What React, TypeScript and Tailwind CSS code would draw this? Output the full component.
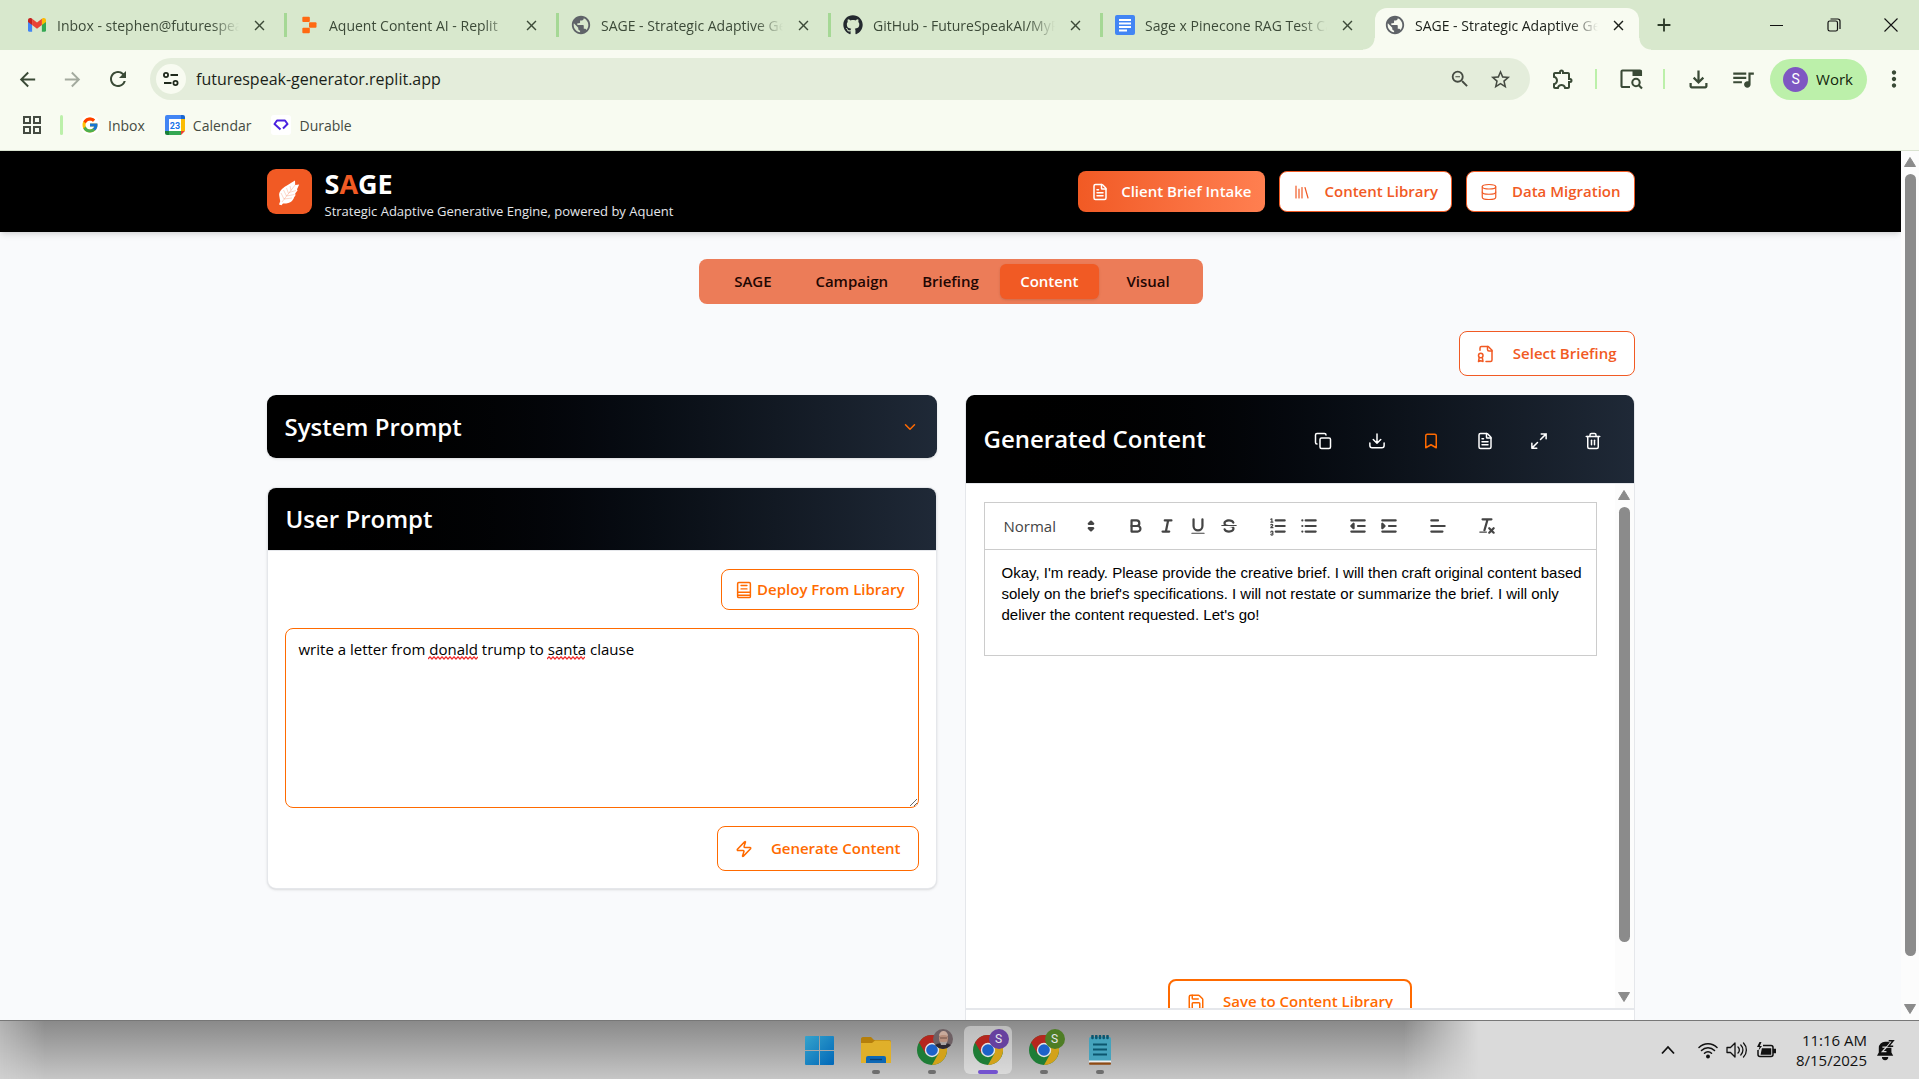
import React, { useState } from "react";
import {
  BookmarkIcon,
  ChevronDown,
  Copy,
  Database,
  FileText,
  Library,
  Save,
  Trash2,
  Zap,
} from "lucide-react";
import { FaGithub } from "react-icons/fa";
import { FcGoogle } from "react-icons/fc";
import {
  MdAdd,
  MdArrowBack,
  MdArrowForward,
  MdClose,
  MdMoreVert,
  MdOutlineExtension,
  MdOutlineFileDownload,
  MdPublic,
  MdQueueMusic,
  MdRefresh,
  MdStarBorder,
  MdZoomOut,
} from "react-icons/md";

/* ---------- brand and browser glyphs ---------- */

const GmailIcon = () => (
  <svg viewBox="0 0 24 24" className="size-[18px]">
    <path fill="#4285f4" d="M0 5.5V19a2 2 0 0 0 2 2h3.5V10z" />
    <path fill="#34a853" d="M24 5.5V19a2 2 0 0 1-2 2h-3.5V10z" />
    <path fill="#c5221f" d="M0 5.5C0 2.8 3 1.9 5 3.3l.5.4V12L0 8z" />
    <path fill="#fbbc04" d="M24 5.5c0-2.700-3-3.600-5-2.200l-.5.4V12L24 8z" />
    <path fill="#ea4335" d="M5.500 3.700 12 8.600l6.500-4.900V12L12 16.900 5.500 12z" />
  </svg>
);

const ReplitIcon = () => (
  <svg viewBox="0 0 24 24" className="size-5" fill="#ff6a13">
    <rect x="4" y="2" width="9" height="6.500" rx="1.200" />
    <rect x="12" y="8.700" width="9" height="6.500" rx="1.200" />
    <rect x="4" y="15.400" width="9" height="6.500" rx="1.200" />
  </svg>
);

const DocsIcon = () => (
  <svg viewBox="0 0 20 20" className="size-5">
    <rect width="20" height="20" rx="2" fill="#4285f4" />
    <path d="M4 5h12M4 8.500h12M4 12h12M4 15.500h8" stroke="#fff" strokeWidth="1.900" />
  </svg>
);

const CalendarIcon = () => (
  <svg viewBox="0 0 20 20" className="size-5">
    <path fill="#4285f4" d="M2 0h14v4H4v12H0V2a2 2 0 0 1 2-2z" />
    <path fill="#1967d2" d="M16 0h2a2 2 0 0 1 2 2v2h-4z" />
    <path fill="#fbbc04" d="M16 4h4v12h-4z" />
    <path fill="#34a853" d="M4 16h12v4H4z" />
    <path fill="#188038" d="M0 16h4v4H2a2 2 0 0 1-2-2z" />
    <path fill="#ea4335" d="M16 16h4l-4 4z" />
    <path fill="#fff" d="M4 4h12v12H4z" />
    <text x="10" y="13.500" textAnchor="middle" fontSize="9" fontWeight="700" fill="#1a73e8" fontFamily="Roboto, sans-serif">
      23
    </text>
  </svg>
);

const DurableIcon = () => (
  <svg viewBox="0 0 20 20" className="size-5">
    <rect width="20" height="20" rx="3" fill="#fff" />
    <path d="M9.500 14.500 3.500 9l2.500-3.500h8L16.500 9 12 13.500" fill="none" stroke="#4a21e0" strokeWidth="2" strokeLinejoin="round" />
  </svg>
);

const SiteInfoIcon = () => (
  <svg viewBox="0 0 18 18" className="size-[18px]" fill="none" stroke="#1f2a1c" strokeWidth="1.800">
    <circle cx="4" cy="5" r="2.100" />
    <path d="M8.500 5H16M2 13h7.500" />
    <circle cx="13.500" cy="13" r="2.100" />
  </svg>
);

const AppsIcon = () => (
  <svg viewBox="0 0 20 20" className="size-5" fill="none" stroke="#454b42" strokeWidth="2">
    <path d="M2 2h6v6H2zM12 2h6v6h-6zM2 12h6v6H2zM12 12h6v6h-6z" />
  </svg>
);

const SearchTabIcon = () => (
  <svg viewBox="0 0 24 24" className="size-6" fill="none" stroke="#3a4a36" strokeWidth="2.100">
    <path d="M11 20H3.500a1 1 0 0 1-1-1V4.500a1 1 0 0 1 1-1H21a1 1 0 0 1 1 1V9" />
    <path d="M13.500 3h9v6h-9z" fill="#3a4a36" stroke="none" />
    <circle cx="17" cy="15.500" r="3.700" />
    <path d="m19.800 18.300 3.200 3.200" />
  </svg>
);

const LeafLogo = () => (
  <svg viewBox="0 0 45 45" className="size-[45px]">
    <path
      fill="#fff"
      d="M28 11.500c-4 2.800-10 5.500-13 8.500-2 2-3.300 4.500-2.800 6.500l1 5.800L12 35.500l2.500.7 1.500-1.700c3 .3 7-.8 8.700-2.300 1.300-1.200 2-2.500 2.300-3.700l1.500-2.300-.3-1.600 2.300-3-.5-1.400 2.200-4.700-4 .6z"
    />
    <path
      fill="none"
      stroke="#f15a24"
      strokeWidth=".7"
      opacity=".35"
      d="M15 33 28.500 15.500M14 24l3 6M16.500 21l3 6M19.500 19l2 5.500M23 17l1 4.500M17 30l8-1M19.500 27l8-1.500M22 23.500l7-2"
    />
  </svg>
);

/* ---------- application glyphs ---------- */

const stroke = {
  viewBox: "0 0 24 24",
  fill: "none",
  stroke: "currentColor",
  strokeWidth: 2,
  strokeLinecap: "round" as const,
  strokeLinejoin: "round" as const,
};

const FileBadgeIcon = () => (
  <svg {...stroke} className="size-[18px]">
    <path d="M12 22h6a2 2 0 0 0 2-2V7l-5-5H6a2 2 0 0 0-2 2v3" />
    <path d="M14 2v4a2 2 0 0 0 2 2h4" />
    <path d="M5 17a3 3 0 1 0 0-6 3 3 0 0 0 0 6z" />
    <path d="M7 16.500 8 22l-3-1-3 1 1-5.500" />
  </svg>
);

const BookIcon = () => (
  <svg {...stroke} className="size-[18px]">
    <rect x="3.500" y="2" width="17" height="20" rx="1.500" />
    <path d="M8 6h8M8 10.500h8M3.500 15h17M3.500 19h17" strokeWidth="1.700" />
  </svg>
);

const ExpandIcon = () => (
  <svg {...stroke} className="size-[18px]">
    <path d="M15 2.500h6.500V9M9 21.500H2.500V15M21.500 2.500 14 10M10 14l-7.500 7.500" />
  </svg>
);

const TrayDownload = () => (
  <svg {...stroke} className="size-[18px]">
    <path d="M12 2.500V15M7 10l5 5 5-5M2.500 14.500V18a3 3 0 0 0 3 3h13a3 3 0 0 0 3-3v-3.500" />
  </svg>
);

/* ---------- rich-text toolbar glyphs (18-unit grid) ---------- */

const Glyph = ({ children }: { children: React.ReactNode }) => (
  <svg viewBox="0 0 18 18" className="size-5" fill="none" stroke="#444" strokeWidth="2" strokeLinecap="round" strokeLinejoin="round">
    {children}
  </svg>
);

const editorGroups: { label: string; icon: React.ReactNode }[][] = [
  [
    {
      label: "Bold",
      icon: (
        <Glyph>
          <path d="M5,4H9.500A2.500,2.500,0,0,1,12,6.500v0A2.500,2.500,0,0,1,9.500,9H5A0,0,0,0,1,5,9V4A0,0,0,0,1,5,4Z" />
          <path d="M5,9h5.500A2.500,2.500,0,0,1,13,11.500v0A2.500,2.500,0,0,1,10.500,14H5a0,0,0,0,1,0,0V9A0,0,0,0,1,5,9Z" />
        </Glyph>
      ),
    },
    { label: "Italic", icon: <Glyph><path d="M7 4h6M5 14h6M8 14l2-10" /></Glyph> },
    {
      label: "Underline",
      icon: (
        <Glyph>
          <path d="M5,3V9a4.012,4.012,0,0,0,4,4H9a4.012,4.012,0,0,0,4-4V3" />
          <rect x="3" y="15" width="12" height="1" rx=".5" fill="#444" stroke="none" />
        </Glyph>
      ),
    },
    {
      label: "Strike",
      icon: (
        <Glyph>
          <path strokeWidth="1" d="M15.500 8.500h-13" />
          <path fill="#444" stroke="none" d="M9.007,8C6.542,7.791,6,7.519,6,6.500,6,5.792,7.283,5,9,5c1.571,0,2.765.679,2.969,1.309a1,1,0,0,0,1.900-.617C13.356,4.106,11.354,3,9,3,6.200,3,4,4.538,4,6.500a3.200,3.200,0,0,0,.5,1.843Z" />
          <path fill="#444" stroke="none" d="M8.984,10C11.457,10.208,12,10.479,12,11.500c0,0.708-1.283,1.500-3,1.500-1.571,0-2.765-.679-2.969-1.309a1,1,0,1,0-1.900.617C4.644,13.894,6.646,15,9,15c2.800,0,5-1.538,5-3.500a3.200,3.200,0,0,0-.5-1.843Z" />
        </Glyph>
      ),
    },
  ],
  [
    {
      label: "Ordered list",
      icon: (
        <Glyph>
          <path d="M7 4h8M7 9h8M7 14h8" />
          <path strokeWidth="1" d="M2.500 5.500h2M3.500 5.500v-3l-1 .5M4.500 10.500h-2c0-1 1.850-1.200 1.850-2.200a1 1 0 0 0-1.850-.3M2.500 14.600a1 1 0 0 1 2 .1 1 1 0 0 1-1 .8 1 1 0 0 1 1 .5 1 1 0 0 1-2 .4" />
        </Glyph>
      ),
    },
    { label: "Bullet list", icon: <Glyph><path d="M6 4h9M6 9h9M6 14h9M3 4h0M3 9h0M3 14h0" /></Glyph> },
  ],
  [
    {
      label: "Outdent",
      icon: (
        <Glyph>
          <path d="M3 14h12M3 4h12M9 9h6" />
          <path d="M5 7v4L3 9z" fill="#444" />
        </Glyph>
      ),
    },
    {
      label: "Indent",
      icon: (
        <Glyph>
          <path d="M3 14h12M3 4h12M9 9h6" />
          <path d="M3 7v4l2-2z" fill="#444" />
        </Glyph>
      ),
    },
  ],
  [{ label: "Align", icon: <Glyph><path d="M3 9h12M3 14h10M3 4h6" /></Glyph> }],
  [
    {
      label: "Clear formatting",
      icon: (
        <Glyph>
          <path d="M5 3h8M6.700 12.800 9.500 3.200M11 11l4 4M15 11l-4 4" />
          <rect x="2" y="14" width="7" height="1" rx=".5" fill="#444" stroke="none" />
        </Glyph>
      ),
    },
  ],
];

/* ---------- browser chrome ---------- */

const Globe = () => <MdPublic className="size-[22px] text-[#5f6368]" />;

const tabs = [
  { title: "Inbox - stephen@futurespeak.ai", icon: <GmailIcon /> },
  { title: "Aquent Content AI - Replit", icon: <ReplitIcon /> },
  { title: "SAGE - Strategic Adaptive Generative", icon: <Globe /> },
  { title: "GitHub - FutureSpeakAI/MyProject", icon: <FaGithub className="size-5 text-[#24292f]" /> },
  { title: "Sage x Pinecone RAG Test Cases", icon: <DocsIcon /> },
];

function TabLabel({ title, icon, dark }: { title: string; icon: React.ReactNode; dark?: boolean }) {
  return (
    <>
      <span className="flex w-6 shrink-0 justify-center">{icon}</span>
      <span
        className={`ml-2 min-w-0 flex-1 overflow-hidden whitespace-nowrap text-[14px] [mask-image:linear-gradient(to_right,#000_85%,transparent)] ${dark ? "text-[#1b1f19]" : "text-[#3c4a38]"}`}
      >
        {title}
      </span>
      <button aria-label={`Close ${title}`} className="ml-3 shrink-0">
        <MdClose className={`size-[17px] ${dark ? "text-[#1b1f19]" : "text-[#3c4a38]"}`} />
      </button>
    </>
  );
}

function TabStrip() {
  return (
    <div className="flex h-[50px] items-center bg-[#d8e8cd] pl-[15px]">
      {tabs.map((t) => (
        <div key={t.title} className="flex h-6 w-[272px] items-center border-r-[3px] border-[#a5d895] pr-4 pl-2.5 nth-5:border-transparent">
          <TabLabel {...t} />
        </div>
      ))}
      <div className="relative mt-2 flex h-[42px] w-[264px] items-center rounded-t-xl bg-[#f8fbf1] pr-3 pb-2 pl-2 before:absolute before:bottom-0 before:-left-3 before:size-3 before:bg-[radial-gradient(circle_at_0_0,transparent_11px,#f8fbf1_12px)] after:absolute after:-right-3 after:bottom-0 after:size-3 after:bg-[radial-gradient(circle_at_100%_0,transparent_11px,#f8fbf1_12px)]">
        <TabLabel title="SAGE - Strategic Adaptive Generative" icon={<Globe />} dark />
      </div>
      <button aria-label="New tab" className="ml-3.5">
        <MdAdd className="size-[22px] text-[#2c3a28]" />
      </button>
      <div className="ml-auto flex items-center text-[#111]">
        <button aria-label="Minimize" className="flex w-[57px] justify-center">
          <svg viewBox="0 0 14 14" className="size-3.5" fill="none" stroke="currentColor"><path d="M0 7.500h13" /></svg>
        </button>
        <button aria-label="Restore" className="flex w-[57px] justify-center">
          <svg viewBox="0 0 14 14" className="size-3.5" fill="none" stroke="currentColor" strokeWidth="1.200">
            <rect x="1" y="3" width="9.500" height="10" rx="1.800" />
            <path d="M3.500 1h7.300a2.200 2.200 0 0 1 2.200 2.200V11" />
          </svg>
        </button>
        <button aria-label="Close window" className="flex w-[57px] justify-center">
          <svg viewBox="0 0 14 14" className="size-3.5" fill="none" stroke="currentColor" strokeWidth="1.100"><path d="m.5.5 13 13m0-13-13 13" /></svg>
        </button>
      </div>
    </div>
  );
}

function AddressRow() {
  return (
    <div className="flex h-[58px] items-center text-[#3a4a36]">
      <div className="flex w-[150px] shrink-0 items-center gap-[22px] pl-4">
        <button aria-label="Back"><MdArrowBack className="size-[23px]" /></button>
        <button aria-label="Forward"><MdArrowForward className="size-[23px] text-[#a3aa9e]" /></button>
        <button aria-label="Reload"><MdRefresh className="size-6" /></button>
      </div>
      <div className="flex h-[42px] flex-1 items-center rounded-full bg-[#e4eddb] pr-[18px] pl-[6px]">
        <button aria-label="Site information" className="flex size-[30px] items-center justify-center rounded-full bg-[#f8fbf1]">
          <SiteInfoIcon />
        </button>
        <input
          aria-label="Address"
          defaultValue="futurespeak-generator.replit.app"
          className="ml-[10px] min-w-0 flex-1 bg-transparent text-[16px] text-[#1b1f19] outline-none"
        />
        <button aria-label="Zoom"><MdZoomOut className="size-[22px] text-[#454b42]" /></button>
        <button aria-label="Bookmark this tab" className="ml-[18px]"><MdStarBorder className="size-[23px] text-[#454b42]" /></button>
      </div>
      <div className="flex shrink-0 items-center pr-3 pl-[21px]">
        <button aria-label="Extensions"><MdOutlineExtension className="size-6" /></button>
        <span className="ml-5 h-5 w-0.5 bg-[#bcf0aa]" />
        <button aria-label="Search tabs" className="ml-[22px]"><SearchTabIcon /></button>
        <span className="ml-5 h-5 w-0.5 bg-[#bcf0aa]" />
        <button aria-label="Downloads" className="ml-5"><MdOutlineFileDownload className="size-[27px]" /></button>
        <button aria-label="Media" className="ml-[18px]"><MdQueueMusic className="size-[26px]" /></button>
        <button className="ml-3.5 flex h-[41px] items-center gap-2 rounded-full bg-[#bcf0aa] pr-3.5 pl-[13px] text-[15px] text-[#12250c]">
          <span className="flex size-[25px] items-center justify-center rounded-full bg-[#7e57c2] font-[Roboto] text-[14px] text-white">S</span>
          Work
        </button>
        <button aria-label="Menu" className="ml-3.5"><MdMoreVert className="size-[26px]" /></button>
      </div>
    </div>
  );
}

function BookmarksBar() {
  return (
    <nav className="flex h-[43px] items-start border-b border-[#d9e2d0] pt-[7px] pl-[22px] text-[14px] text-[#454b42]">
      <button aria-label="Apps" className="flex h-5"><AppsIcon /></button>
      <span className="ml-[18px] h-5 w-[3px] rounded bg-[#bcf0aa]" />
      <a href="#" className="ml-[17px] flex h-5 items-center gap-2">
        <span className="flex size-5 items-center justify-center rounded-full bg-white"><FcGoogle className="size-[18px]" /></span>
        Inbox
      </a>
      <a href="#" className="ml-5 flex h-5 items-center gap-2"><CalendarIcon />Calendar</a>
      <a href="#" className="ml-5 flex h-5 items-center gap-2"><DurableIcon />Durable</a>
    </nav>
  );
}

/* ---------- application page ---------- */

function AppHeader() {
  const outline =
    "flex h-[41px] items-center gap-3.5 rounded-lg border border-[#f15a24] bg-white px-[13px] text-[15px] font-semibold text-[#f15a24]";
  return (
    <header className="relative bg-black shadow-md">
      <div className="mx-auto flex h-[81px] max-w-[1400px] items-center justify-between px-4">
        <div className="flex items-center gap-[13px]">
          <div className="flex size-[45px] items-center justify-center rounded-[9px] bg-[#f15a24]"><LeafLogo /></div>
          <div className="pt-1">
            <h1 className="text-[27px] leading-[34px] font-bold text-white">S<span className="text-[#f15a24]">A</span>GE</h1>
            <p className="text-[13px] leading-[20px] text-gray-200">Strategic Adaptive Generative Engine, powered by Aquent</p>
          </div>
        </div>
        <div className="flex gap-3.5">
          <button className="flex h-[41px] items-center gap-3 rounded-lg bg-gradient-to-r from-[#f15a24] to-[#ff7f50] px-[13px] text-[15px] font-semibold text-white">
            <FileText className="size-[18px]" />Client Brief Intake
          </button>
          <button className={outline}><Library className="size-[18px]" strokeWidth={1.6} />Content Library</button>
          <button className={outline}><Database className="size-[18px]" strokeWidth={1.6} />Data Migration</button>
        </div>
      </div>
    </header>
  );
}

function SectionTabs() {
  const [active, setActive] = useState("Content");
  return (
    <nav className="mx-auto grid h-[45px] w-[504px] grid-cols-5 rounded-lg bg-[#ec7c58] p-[5px]">
      {["SAGE", "Campaign", "Briefing", "Content", "Visual"].map((t) => (
        <button
          key={t}
          onClick={() => setActive(t)}
          className={`rounded-md text-[15px] font-semibold ${active === t ? "bg-[#f15a24] text-white shadow-sm" : "text-[#1f0703]"}`}
        >
          {t}
        </button>
      ))}
    </nav>
  );
}

const panelHead = "flex items-center justify-between bg-gradient-to-r from-black to-[#1f2937] px-[18px] text-white";
const panelTitle = "text-[24px] font-semibold";

function PromptColumn() {
  return (
    <div className="flex flex-col items-stretch gap-[29px]">
      <section className={`${panelHead} h-[63px] rounded-[9px] shadow-sm`}>
        <h2 className={panelTitle}>System Prompt</h2>
        <button aria-label="Expand system prompt"><ChevronDown className="size-[18px] text-[#ff6a00]" /></button>
      </section>
      <section className="overflow-hidden rounded-[9px] border border-gray-200 bg-white shadow-sm">
        <div className={`${panelHead} h-[62px]`}><h2 className={panelTitle}>User Prompt</h2></div>
        <div className="flex flex-col items-end gap-[18px] border-t border-gray-200 p-[17px] pt-[18px]">
          <button className="flex h-[41px] items-center gap-1 rounded-lg border border-[#ff6a00] px-[13px] text-[15px] font-semibold text-[#ff6a00]">
            <BookIcon />Deploy From Library
          </button>
          <div className="relative flex w-full">
            <textarea
              aria-label="User prompt"
              spellCheck={false}
              defaultValue="write a letter from donald trump to santa clause"
              className="h-[180px] w-full rounded-lg border border-[#ff6a00] px-[13px] py-[9px] text-[15px] leading-[23px] text-black outline-none"
            />
            <svg className="absolute top-7 left-[143px] h-1 w-[50px]"><Squiggle width={50} /></svg>
            <svg className="absolute top-7 left-[262px] h-1 w-[38px]"><Squiggle width={38} /></svg>
          </div>
          <button className="flex h-[45px] items-center gap-[18px] rounded-lg border border-[#ff6a00] px-[17px] text-[15px] font-semibold text-[#ff6a00]">
            <Zap className="size-[18px]" />Generate Content
          </button>
        </div>
      </section>
    </div>
  );
}

function Squiggle({ width }: { width: number }) {
  const points = Array.from({ length: Math.floor(width / 2) + 1 }, (_, i) => `${i * 2},${i % 2 ? 0.8 : 3}`).join(" ");
  return <polyline points={points} fill="none" stroke="#ef2b2b" strokeWidth="1.200" />;
}

function ScrollBar({ thumb, className }: { thumb: string; className: string }) {
  return (
    <div aria-hidden className={`flex shrink-0 flex-col items-center bg-[#fcfcfc] ${className}`}>
      <svg viewBox="0 0 12 10" className="w-3"><path d="M6 .5 11.500 9.500H.5z" fill="#8b8b8b" stroke="#8b8b8b" strokeLinejoin="round" /></svg>
      <div className="flex w-full flex-1 justify-center pt-[7px]">
        <div className={`w-[11px] rounded-full bg-[#8b8b8b] ${thumb}`} />
      </div>
      <svg viewBox="0 0 12 10" className="w-3"><path d="M6 9.500.5.5h11z" fill="#8b8b8b" stroke="#8b8b8b" strokeLinejoin="round" /></svg>
    </div>
  );
}

function GeneratedPanel() {
  const actions = [
    { label: "Copy", icon: <Copy className="size-[18px]" /> },
    { label: "Download", icon: <TrayDownload /> },
    { label: "Save", icon: <BookmarkIcon className="size-[18px] text-[#ff6a00]" /> },
    { label: "Open as document", icon: <FileText className="size-[18px]" /> },
    { label: "Expand", icon: <ExpandIcon /> },
    { label: "Delete", icon: <Trash2 className="size-[18px]" /> },
  ];
  return (
    <section className="overflow-hidden rounded-t-[9px] border border-t-0 border-gray-200 bg-white">
      <div className={`${panelHead} h-[88px]`}>
        <h2 className={panelTitle}>Generated Content</h2>
        <div className="mt-1 flex gap-[9px]">
          {actions.map((a) => (
            <button key={a.label} aria-label={a.label} className="flex size-[45px] items-center justify-center">{a.icon}</button>
          ))}
        </div>
      </div>
      <div className="flex h-[527px] overflow-hidden border-t border-b-2 border-gray-200">
        <div className="flex min-w-0 flex-1 flex-col px-[18px] pt-[18px]">
          <div className="border border-[#ccc]">
            <div className="flex h-[47px] items-center border-b border-[#ccc] pl-[19px]">
              <div className="relative mr-5 flex w-[97px] items-center">
                <select aria-label="Text style" className="w-full appearance-none bg-transparent text-[15px] text-[#444] outline-none">
                  <option>Normal</option>
                </select>
                <svg viewBox="0 0 18 18" className="pointer-events-none absolute right-0 size-5" fill="#444" stroke="#444" strokeWidth="2" strokeLinejoin="round">
                  <path d="M7 11l2 2 2-2zM7 7l2-2 2 2z" />
                </svg>
              </div>
              {editorGroups.map((g, i) => (
                <div key={i} className="mr-[18px] flex">
                  {g.map((t) => (
                    <button key={t.label} aria-label={t.label} className="flex w-[31px] items-center justify-center">{t.icon}</button>
                  ))}
                </div>
              ))}
            </div>
            <p className="h-[105px] py-3 pr-2 pl-[17px] font-['Liberation_Sans',sans-serif] text-[15px] leading-[21px] text-black">
              Okay, I'm ready. Please provide the creative brief. I will then craft original content based solely on the brief's specifications. I will not restate or summarize the brief. I will only deliver the content requested. Let's go!
            </p>
          </div>
          <button className="mx-auto mt-[323px] flex h-[45px] shrink-0 items-center gap-[18px] rounded-lg border-2 border-[#ff6a00] px-[17px] text-[15px] font-semibold text-[#ff6a00]">
            <Save className="size-[18px]" />Save to Content Library
          </button>
        </div>
        <ScrollBar className="w-[19px] py-[6px]" thumb="h-[435px]" />
      </div>
      <div className="h-16" />
    </section>
  );
}

function Page() {
  return (
    <div className="flex min-h-0 flex-1 overflow-hidden">
      <div className="flex min-w-0 flex-1 flex-col overflow-hidden bg-[#f9fafc]">
        <AppHeader />
        <main className="mx-auto w-full max-w-[1400px] px-4 pt-[27px]">
          <SectionTabs />
          <div className="mt-[27px] flex justify-end">
            <button className="flex h-[45px] items-center gap-[18px] rounded-lg border border-[#f15a24] bg-white px-[17px] text-[15px] font-semibold text-[#f15a24]">
              <FileBadgeIcon />Select Briefing
            </button>
          </div>
          <div className="mt-[19px] grid grid-cols-2 items-start gap-7">
            <PromptColumn />
            <GeneratedPanel />
          </div>
        </main>
      </div>
      <ScrollBar className="w-[18px] py-[6px]" thumb="h-[782px]" />
    </div>
  );
}

/* ---------- desktop taskbar ---------- */

const ChromeIcon = () => (
  <svg viewBox="0 0 30 30" className="size-[30px]">
    <circle cx="15" cy="15" r="15" fill="#1e7d36" />
    <path d="M15 15 2 7.500A15 15 0 0 1 28 7.500z" fill="#b5261e" />
    <path d="M15 8h13.300A15 15 0 0 1 15 30l6.500-11.500z" fill="#d3a21a" />
    <path d="M2 7.500 8.700 18.800 15 15V8z" fill="#b5261e" />
    <circle cx="15" cy="15" r="7.200" fill="#e6e6e6" />
    <circle cx="15" cy="15" r="5.800" fill="#1d62c9" />
  </svg>
);

const WindowsIcon = () => (
  <svg viewBox="0 0 29 29" className="size-[29px]">
    <defs>
      <linearGradient id="win" x1="0" y1="0" x2="1" y2="1">
        <stop offset="0" stopColor="#35a3cc" />
        <stop offset="1" stopColor="#0067b8" />
      </linearGradient>
    </defs>
    <path fill="url(#win)" d="M1 0h13v14H0V1a1 1 0 0 1 1-1zM15 0h13a1 1 0 0 1 1 1v13H15zM0 15h14v14H1a1 1 0 0 1-1-1zM15 15h14v13a1 1 0 0 1-1 1H15z" />
  </svg>
);

const FolderIcon = () => (
  <svg viewBox="0 0 30 28" className="w-[30px]">
    <path d="M0 2.500A2 2 0 0 1 2 1h8l3 3h15a2 2 0 0 1 2 2v4H0z" fill="#b57f0c" />
    <path d="M0 7h11l3-2.500h14a2 2 0 0 1 2 2V27H0z" fill="#e0b02a" />
    <path d="M5 27v-5a2 2 0 0 1 2-2h16a2 2 0 0 1 2 2v5z" fill="#0d68b5" />
    <path d="M9 23.500h12" stroke="#0a3f72" strokeWidth="1.300" />
  </svg>
);

const NotepadIcon = () => (
  <svg viewBox="0 0 22 30" className="h-[30px]">
    <rect y="2" width="22" height="25" rx="1.500" fill="#45a3bd" />
    <rect y="25.500" width="22" height="2" fill="#eee" />
    <rect y="27.500" width="22" height="2.200" rx="1" fill="#8f4a12" />
    <path d="M4 9.500h14M4 14.500h14M4 19.500h14" stroke="#0c566f" strokeWidth="1.800" />
    <path d="M3.500 1v2M7.300 1v2M11 1v2M14.700 1v2M18.500 1v2" stroke="#0c566f" strokeWidth="2.600" strokeLinecap="round" />
  </svg>
);

const PortraitBadge = () => (
  <svg viewBox="0 0 20 20" className="absolute -top-1.5 -right-1.5 size-5">
    <clipPath id="face"><circle cx="10" cy="10" r="10" /></clipPath>
    <g clipPath="url(#face)">
      <path fill="#6e6064" d="M0 0h20v20H0z" />
      <path fill="#2c2730" d="M0 20c1-4 4-6 10-6s9 2 10 6z" />
      <ellipse cx="10.500" cy="9.500" rx="4.500" ry="6" fill="#b98f7d" />
      <path d="M6 7a4.500 5 0 0 1 9 0c-2-1.500-7-1.500-9 0z" fill="#c9aa9c" />
      <path d="M7 12.500c2 1 5 1 7 0l-1 3.500h-5z" fill="#a7a2a2" />
      <path d="M7 9h7" stroke="#5b4038" strokeWidth=".8" />
    </g>
  </svg>
);

const letterBadge = "absolute -top-1.5 -right-1.5 flex size-5 items-center justify-center rounded-full font-[Roboto] text-[12px] text-gray-200";

function Taskbar() {
  const apps = [
    { label: "Start", icon: <WindowsIcon />, mark: "bg-transparent w-2" },
    { label: "File Explorer", icon: <FolderIcon />, mark: "bg-[#6e6e6e] w-2" },
    { label: "Chrome, personal", icon: <><ChromeIcon /><PortraitBadge /></>, mark: "bg-[#6e6e6e] w-2" },
    {
      label: "Chrome, work",
      icon: <><ChromeIcon /><span className={`${letterBadge} bg-[#67419f]`}>S</span></>,
      mark: "bg-[#7352cf] w-5",
      active: true,
    },
    {
      label: "Chrome, studio",
      icon: <><ChromeIcon /><span className={`${letterBadge} bg-[#4e7d25]`}>S</span></>,
      mark: "bg-[#6e6e6e] w-2",
    },
    { label: "Notepad", icon: <NotepadIcon />, mark: "bg-[#6e6e6e] w-2" },
  ];
  return (
    <footer className="relative flex h-[59px] shrink-0 items-center justify-center border-t border-[#777] bg-[#dadada]">
      <div className="absolute inset-y-0 left-0 w-[77%] bg-gradient-to-b from-[#8a8a8a] to-[#c6c6c6] [mask-image:linear-gradient(to_right,rgba(0,0,0,.5),#000_3%,#000_95%,transparent)]" />
      <div className="relative flex gap-2">
        {apps.map((a) => (
          <button
            key={a.label}
            aria-label={a.label}
            className={`flex h-12 w-12 flex-col items-center justify-end rounded-md ${a.active ? "bg-white/40" : ""}`}
          >
            <span className="relative flex h-[30px] items-center">{a.icon}</span>
            <span className={`mt-[5px] h-1 rounded-full ${a.mark}`} />
          </button>
        ))}
      </div>
      <div className="absolute inset-y-0 right-6 flex items-center text-[#111]">
        <svg viewBox="0 0 16 16" className="size-4" fill="none" stroke="currentColor" strokeWidth="1.800"><path d="m2 11.500 6-6.500 6 6.500" /></svg>
        <svg viewBox="0 0 20 18" className="ml-[22px] w-5" fill="none" stroke="currentColor" strokeWidth="1.500" strokeLinecap="round">
          <path d="M1 6.500a12.500 12.500 0 0 1 18 0M3.500 9.500a9 9 0 0 1 13 0M6.500 12.300a5 5 0 0 1 7 0" />
          <circle cx="10" cy="15.500" r="1.200" fill="currentColor" />
        </svg>
        <svg viewBox="0 0 22 18" className="ml-2 w-[22px]" fill="none" stroke="currentColor" strokeWidth="1.300" strokeLinecap="round" strokeLinejoin="round">
          <path d="M1 6.500h3.500L9 2v14l-4.500-4.500H1zM12 6a4 4 0 0 1 0 6M14.800 4a7 7 0 0 1 0 10M17.500 2a10 10 0 0 1 0 14" />
        </svg>
        <svg viewBox="0 0 20 18" className="ml-2 w-5" fill="none" stroke="currentColor" strokeWidth="1.500">
          <path d="M7 4.500h8a2 2 0 0 1 2 2v7a2 2 0 0 1-2 2H4a2 2 0 0 1-2-2V9" />
          <path d="M6.500 8h8v5h-9zM17.500 8.500h2v3h-2z" fill="currentColor" />
          <path d="M3.500 1 1 6h2.500L2.500 9.500 6 5H3.800L5.500 1z" fill="currentColor" stroke="none" />
        </svg>
        <div className="ml-5 text-right text-[15px] leading-5">
          <div>11:16 AM</div>
          <div>8/15/2025</div>
        </div>
        <svg viewBox="0 0 20 24" className="ml-2.5 w-[18px]" fill="currentColor">
          <path d="M9 3a7 7 0 0 0-7 7v5l-2 3.500h18L16 15V3z" />
          <path d="M5.500 20h7a3.500 3.500 0 0 1-7 0z" />
          <path d="M6 9h4.500L6 14h4.500" fill="none" stroke="#dadada" strokeWidth="1.500" />
          <path d="M13 2h5l-5 6h5" fill="none" stroke="#dadada" strokeWidth="3.500" />
          <path d="M13 2h5l-5 6h5" fill="none" stroke="currentColor" strokeWidth="1.600" />
        </svg>
      </div>
    </footer>
  );
}

export default function App() {
  return (
    <div className="flex h-screen flex-col overflow-hidden bg-[#f8fbf1] font-['Open_Sans','Noto_Sans',sans-serif]">
      <TabStrip />
      <AddressRow />
      <BookmarksBar />
      <Page />
      <Taskbar />
    </div>
  );
}
